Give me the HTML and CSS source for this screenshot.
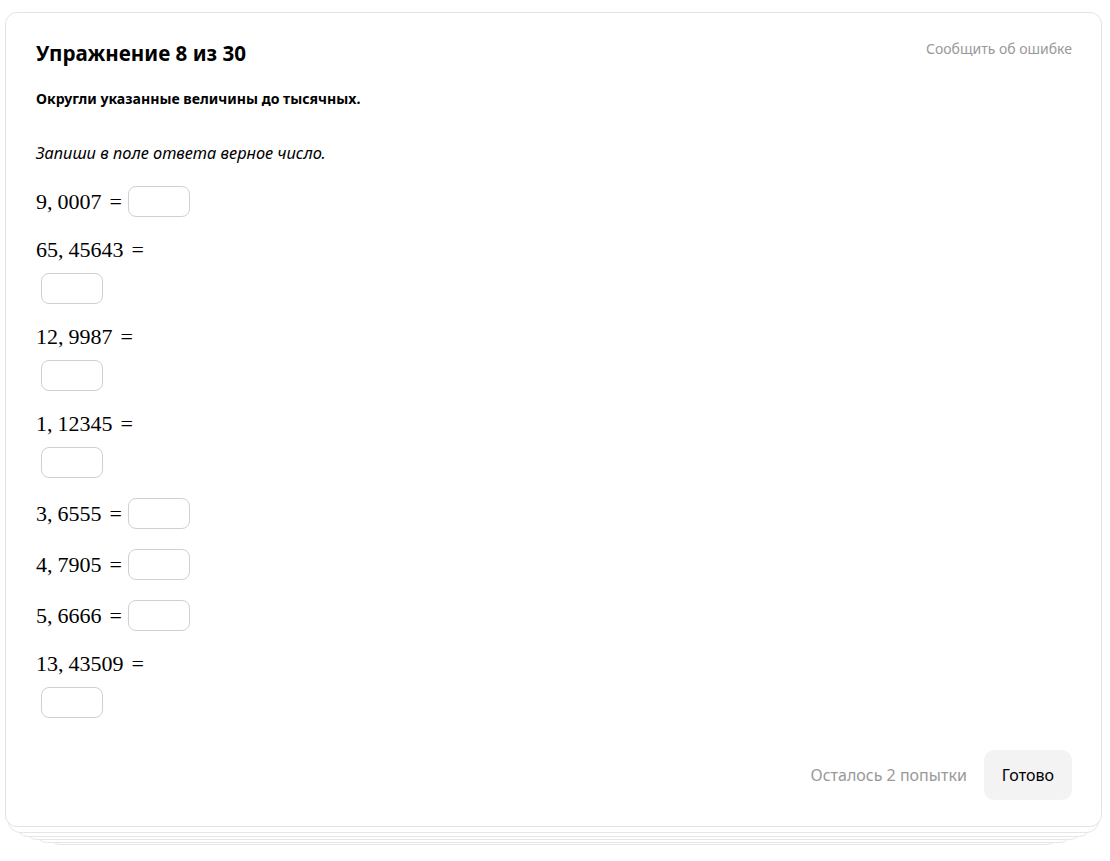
FILE: index.html
```html
<!DOCTYPE html>
<html lang="ru">
<head>
<meta charset="utf-8">
<link rel="stylesheet" href="styles.css">
</head>
<body>
<div class="stack">
  <div class="layer l5"></div>
  <div class="layer l4"></div>
  <div class="layer l3"></div>
  <div class="layer l2"></div>
  <div class="layer l1"></div>
  <div class="card">
    <div class="head">
      <h1 class="title">Упражнение 8 из 30</h1>
      <a class="report">Сообщить об ошибке</a>
    </div>
    <p class="task">Округли указанные величины до тысячных.</p>
    <p class="hint">Запиши в поле ответа верное число.</p>
    <div class="rows">
      <div class="row inline"><span class="math">9,<i class="sp"></i>0007<i class="eq">=</i></span><span class="inp"></span></div>
      <div class="row wrap"><span class="math">65,<i class="sp"></i>45643<i class="eq">=</i></span><span class="inp"></span></div>
      <div class="row wrap"><span class="math">12,<i class="sp"></i>9987<i class="eq">=</i></span><span class="inp"></span></div>
      <div class="row wrap"><span class="math">1,<i class="sp"></i>12345<i class="eq">=</i></span><span class="inp"></span></div>
      <div class="row inline"><span class="math">3,<i class="sp"></i>6555<i class="eq">=</i></span><span class="inp"></span></div>
      <div class="row inline"><span class="math">4,<i class="sp"></i>7905<i class="eq">=</i></span><span class="inp"></span></div>
      <div class="row inline"><span class="math">5,<i class="sp"></i>6666<i class="eq">=</i></span><span class="inp"></span></div>
      <div class="row wrap"><span class="math">13,<i class="sp"></i>43509<i class="eq">=</i></span><span class="inp"></span></div>
    </div>
    <div class="foot">
      <span class="left">Осталось 2 попытки</span>
      <button class="done">Готово</button>
    </div>
  </div>
</div>
</body>
</html>
```
FILE: styles.css
```css
html, body { margin: 0; padding: 0; background: #fff; }
body { font-family: "Noto Sans", "Open Sans", sans-serif; color: #000; padding: 12px 8px 40px 5px; }
.stack { position: relative; width: 1097px; height: 815px; }
.card {
  position: relative; z-index: 6;
  background: #fff; border: 1px solid #e3e3e3; border-radius: 12px;
  box-sizing: border-box; height: 815px;
  padding: 26px 29px 0 30px;
  display: flex; flex-direction: column;
}
.layer { position: absolute; background: #fff; border: 1px solid #e6e6e6; border-radius: 12px; box-sizing: border-box; height: 802px; }
.l1 { left: 3px; right: 3px; top: 19px; z-index: 5; }
.l2 { left: 11px; right: 11px; top: 23px; z-index: 4; }
.l3 { left: 20px; right: 20px; top: 26px; z-index: 3; }
.l4 { left: 30px; right: 30px; top: 29px; z-index: 2; }
.l5 { left: 43px; right: 43px; top: 31px; z-index: 1; }
.head { display: flex; justify-content: space-between; align-items: flex-start; }
.title { margin: 0; font-size: 20.6px; font-weight: 700; line-height: 28px; }
.report { color: #999; font-size: 14px; line-height: 20px; margin-top: 0; }
.task { margin: 22px 0 0; font-size: 14.1px; font-weight: 700; line-height: 20px; }
.hint { margin: 32px 0 0; font-size: 16.4px; font-style: italic; line-height: 24px; }
.rows { margin-top: 21px; display: flex; flex-direction: column; gap: 20px; }
.row { display: flex; }
.row.inline { align-items: center; }
.row.wrap { flex-direction: column; align-items: flex-start; }
.math { font-family: "Liberation Serif", "Times New Roman", serif; font-size: 22px; line-height: 26px; white-space: pre; }
.math i { font-style: normal; display: inline-block; }
.sp { width: 5px; }
.eq { margin: 0 6px 0 8px; }
.inp { display: block; width: 62px; height: 31px; box-sizing: border-box; border: 1px solid #d0d0d0; border-radius: 8px; }
.wrap .inp { margin: 10px 0 0 5px; }
.foot { margin-top: auto; margin-bottom: 26px; display: flex; justify-content: flex-end; align-items: center; gap: 17px; }
.left { color: #999; font-size: 16px; }
.done { font-family: inherit; font-size: 16px; color: #000; background: #f3f3f3; border: none; border-radius: 10px; height: 50px; padding: 0 18px; }
```
